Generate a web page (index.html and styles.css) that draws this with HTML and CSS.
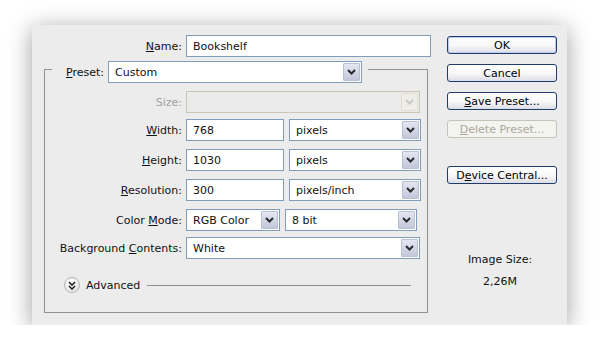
FILE: index.html
```html
<!DOCTYPE html>
<html lang="en">
<head>
  <meta charset="utf-8">
  <title>New</title>
  <link rel="stylesheet" href="styles.css">
</head>
<body>
  <div class="dialog">
    <div class="main">
      <div class="row name-row">
        <label class="lbl"><u>N</u>ame:</label>
        <div class="field name-field">Bookshelf</div>
      </div>

      <fieldset class="group">
        <legend class="preset">
          <span class="preset-lbl"><u>P</u>reset:</span>
          <div class="field combo preset-combo">
            <span>Custom</span>
            <span class="drop"><svg width="9" height="6" viewBox="0 0 9 6"><polyline points="1,1 4.5,4.5 8,1" fill="none" stroke="#2b2b2b" stroke-width="2"/></svg></span>
          </div>
        </legend>

        <div class="row off">
          <label class="lbl">Size:</label>
          <div class="field combo full">
            <span></span>
            <span class="drop"><svg width="9" height="6" viewBox="0 0 9 6"><polyline points="1,1 4.5,4.5 8,1" fill="none" stroke="#c8c8c8" stroke-width="2"/></svg></span>
          </div>
        </div>

        <div class="row snug">
          <label class="lbl"><u>W</u>idth:</label>
          <div class="field num">768</div>
          <div class="field combo unit">
            <span>pixels</span>
            <span class="drop"><svg width="9" height="6" viewBox="0 0 9 6"><polyline points="1,1 4.5,4.5 8,1" fill="none" stroke="#2b2b2b" stroke-width="2"/></svg></span>
          </div>
        </div>

        <div class="row">
          <label class="lbl"><u>H</u>eight:</label>
          <div class="field num">1030</div>
          <div class="field combo unit">
            <span>pixels</span>
            <span class="drop"><svg width="9" height="6" viewBox="0 0 9 6"><polyline points="1,1 4.5,4.5 8,1" fill="none" stroke="#2b2b2b" stroke-width="2"/></svg></span>
          </div>
        </div>

        <div class="row">
          <label class="lbl"><u>R</u>esolution:</label>
          <div class="field num">300</div>
          <div class="field combo unit">
            <span>pixels/inch</span>
            <span class="drop"><svg width="9" height="6" viewBox="0 0 9 6"><polyline points="1,1 4.5,4.5 8,1" fill="none" stroke="#2b2b2b" stroke-width="2"/></svg></span>
          </div>
        </div>

        <div class="row">
          <label class="lbl">Color <u>M</u>ode:</label>
          <div class="field combo mode">
            <span>RGB Color</span>
            <span class="drop"><svg width="9" height="6" viewBox="0 0 9 6"><polyline points="1,1 4.5,4.5 8,1" fill="none" stroke="#2b2b2b" stroke-width="2"/></svg></span>
          </div>
          <div class="field combo unit">
            <span>8 bit</span>
            <span class="drop"><svg width="9" height="6" viewBox="0 0 9 6"><polyline points="1,1 4.5,4.5 8,1" fill="none" stroke="#2b2b2b" stroke-width="2"/></svg></span>
          </div>
        </div>

        <div class="row snug">
          <label class="lbl">Background <u>C</u>ontents:</label>
          <div class="field combo full">
            <span>White</span>
            <span class="drop"><svg width="9" height="6" viewBox="0 0 9 6"><polyline points="1,1 4.5,4.5 8,1" fill="none" stroke="#2b2b2b" stroke-width="2"/></svg></span>
          </div>
        </div>

        <div class="advanced">
          <span class="adv-btn"><svg width="8" height="9" viewBox="0 0 8 9"><polyline points="1,1 4,4 7,1" fill="none" stroke="#222" stroke-width="1.6"/><polyline points="1,5 4,8 7,5" fill="none" stroke="#222" stroke-width="1.6"/></svg></span>
          <span>Advanced</span>
          <span class="adv-line"></span>
        </div>
      </fieldset>
    </div>

    <div class="side">
      <button class="btn default">OK</button>
      <button class="btn">Cancel</button>
      <button class="btn"><u>S</u>ave Preset...</button>
      <button class="btn" disabled><u>D</u>elete Preset...</button>
      <button class="btn device">D<u>e</u>vice Central...</button>
      <div class="img-size">
        <div>Image Size:</div>
        <div>2,26M</div>
      </div>
    </div>
  </div>
</body>
</html>
```

FILE: styles.css
```css
body{
  margin: 0;
  background: #fff;
  font-family: "DejaVu Sans", Verdana, sans-serif;
  font-size: 11px;
  color: #111;
}

.dialog{
  margin: 25px 0 0 32px;
  width: 535px;
  height: 300px;
  box-sizing: border-box;
  padding: 10px 10px 0 12px;
  display: flex;
  background: #ececec;
  box-shadow: 0 4px 22px rgba(0,0,0,0.38);
}

.main{
  width: 387px;
}

.row{
  display: flex;
  align-items: center;
  gap: 5px;
  height: 22px;
  margin-top: 8px;
}
.row.snug{
  margin-top: 6px;
}
.name-row{
  margin-top: 0;
  gap: 4px;
}

.lbl{
  width: 137px;
  flex: none;
  text-align: right;
  margin-right: -1px;
}
.name-row .lbl{
  width: 138px;
  margin-right: 0;
}

.field{
  box-sizing: border-box;
  height: 22px;
  border: 1px solid #7f9db9;
  background: #fff;
  padding: 0 6px;
  display: flex;
  align-items: center;
}
.name-field{ width: 245px; }
.num{ width: 98px; }
.unit{ width: 132px; }
.mode{ width: 94px; }
.full{ width: 234px; }

.combo{
  justify-content: space-between;
  padding-right: 1px;
}
.drop{
  width: 17px;
  height: 18px;
  box-sizing: border-box;
  border: 1px solid #b9bfd3;
  border-radius: 1px;
  background: linear-gradient(#e4e6f1, #c3c7da);
  display: flex;
  align-items: center;
  justify-content: center;
}

/* group box with preset as its caption */
.group{
  width: 384px;
  box-sizing: border-box;
  margin: -2px 0 0 0;
  padding: 0 0 19px 0;
  border: 1px solid #929292;
  min-width: 0;
}
.preset{
  display: flex;
  align-items: center;
  gap: 4px;
  margin-left: 7px;
  padding: 6px 6px 0 14px;
}
.preset-combo{
  width: 254px;
}
.group .row:first-of-type{
  margin-top: 8px;
}

.off .lbl{
  color: #a2a2a2;
}
.off .field{
  background: #ebebeb;
  border-color: #cac7b8;
}
.off .drop{
  background: #eeede8;
  border-color: #e0ddd3;
}

.advanced{
  display: flex;
  align-items: center;
  margin-top: 18px;
  padding-left: 19px;
  height: 16px;
}
.adv-btn{
  width: 16px;
  height: 16px;
  box-sizing: border-box;
  border-radius: 50%;
  border: 1px solid #b4b4b4;
  background: radial-gradient(circle at 40% 35%, #fff, #dedede);
  display: flex;
  align-items: center;
  justify-content: center;
  margin-right: 6px;
}
.adv-line{
  flex: 1;
  height: 1px;
  background: #8e8e8e;
  margin: 0 16px 0 7px;
}

/* right buttons */
.side{
  margin-left: 16px;
  width: 110px;
  display: flex;
  flex-direction: column;
  padding-top: 1px;
}
.btn{
  font: inherit;
  color: #000;
  height: 18px;
  padding: 0;
  margin-bottom: 10px;
  border: 1px solid #1f3c6b;
  border-radius: 3px;
  background: linear-gradient(#fff, #f7f7f9 55%, #dcdce6);
}
.btn.default{
  box-shadow: inset 0 0 0 1px #b9cbf1;
}
.btn:disabled{
  color: #aca99d;
  border-color: #c6c4b9;
  background: #f3f3f0;
}
.btn.device{
  margin-top: 18px;
}

.img-size{
  margin-top: 59px;
  text-align: center;
  display: flex;
  flex-direction: column;
  gap: 9px;
  padding-right: 4px;
}
```
